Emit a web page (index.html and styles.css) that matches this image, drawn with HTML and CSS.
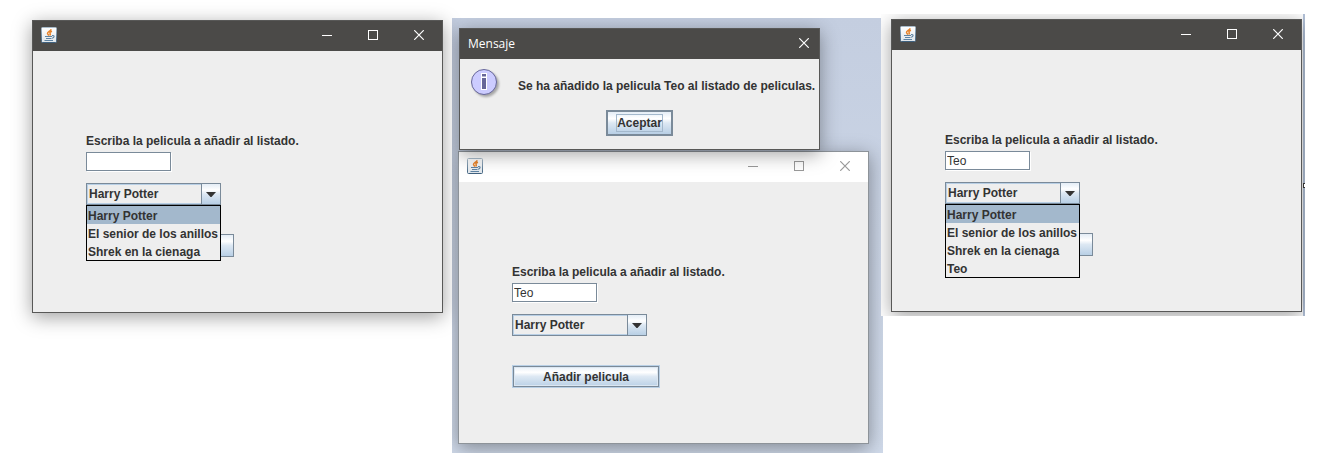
FILE: index.html
```html
<!DOCTYPE html>
<html lang="es">
<head>
<meta charset="utf-8">
<title>Listado de peliculas</title>
<link rel="stylesheet" href="styles.css">
</head>
<body>
<svg class="sprite" aria-hidden="true">
  <defs>
    <linearGradient id="tile" x1="0" y1="0" x2="0" y2="1"><stop offset="0" stop-color="#ffffff"/><stop offset="1" stop-color="#dfe5ea"/></linearGradient>
    <linearGradient id="edge" x1="0" y1="0" x2="0" y2="1"><stop offset="0" stop-color="#a9bccb"/><stop offset="1" stop-color="#3f617f"/></linearGradient>
  </defs>
  <symbol id="java" viewBox="0 0 16 16">
    <rect x=".5" y=".5" width="15" height="15" rx="1" fill="url(#tile)" stroke="url(#edge)"/>
    <path d="M10 2.300C10 4.200 6.300 4.800 6.500 6.500C6.600 7.300 7.400 7.800 7.900 8.600M11 4.300C8.800 5 8.500 5.800 9.200 6.600C9.700 7.300 9.200 7.900 8.700 8.400" fill="none" stroke="#e8832a" stroke-width="1.500"/>
    <path d="M4 9.500H11M5 11.500H10.500M3.500 13.500H12" fill="none" stroke="#5e83a3" stroke-width="1.200"/>
    <path d="M11 8.600C14 8 13.600 10.800 11 11.200" fill="none" stroke="#5e83a3" stroke-width="1.100"/>
  </symbol>
  <symbol id="min" viewBox="0 0 10 10"><path d="M0 5.500H10" stroke="currentColor"/></symbol>
  <symbol id="max" viewBox="0 0 10 10"><rect x=".5" y=".5" width="9" height="9" fill="none" stroke="currentColor"/></symbol>
  <symbol id="close" viewBox="0 0 10 10"><path d="M.2 .2L9.800 9.800M9.800 .2L.2 9.800" stroke="currentColor" stroke-width="1.200"/></symbol>
  <symbol id="arrow" viewBox="0 0 10 5"><path d="M0 0H10L5.500 5H4.500Z" fill="#333"/></symbol>
</svg>
<main class="shots">
  <section class="shot shot-first">
    <article class="window">
      <header class="titlebar">
        <svg class="app-icon"><use href="#java"/></svg>
        <div class="controls">
          <button class="control" aria-label="Minimizar"><svg><use href="#min"/></svg></button>
          <button class="control" aria-label="Maximizar"><svg><use href="#max"/></svg></button>
          <button class="control" aria-label="Cerrar"><svg><use href="#close"/></svg></button>
        </div>
      </header>
      <form class="form">
        <label class="caption" for="title-1">Escriba la pelicula a añadir al listado.</label>
        <input class="field" id="title-1" type="text">
        <div class="combo">
          <select class="select" aria-label="Peliculas"><option>Harry Potter</option><option>El senior de los anillos</option><option>Shrek en la cienaga</option></select>
          <span class="arrow"><svg><use href="#arrow"/></svg></span>
          <ul class="popup" role="listbox" aria-label="Opciones">
            <li class="option selected" role="option" aria-selected="true">Harry Potter</li>
            <li class="option" role="option">El senior de los anillos</li>
            <li class="option" role="option">Shrek en la cienaga</li>
          </ul>
        </div>
        <button class="add" type="button" aria-label="Añadir pelicula"></button>
      </form>
    </article>
  </section>

  <section class="shot shot-desktop">
    <article class="window dialog" role="dialog" aria-labelledby="dialog-title">
      <header class="titlebar">
        <h1 class="title" id="dialog-title">Mensaje</h1>
        <div class="controls">
          <button class="control" aria-label="Cerrar"><svg><use href="#close"/></svg></button>
        </div>
      </header>
      <div class="dialog-body">
        <div class="message">
          <svg class="info" viewBox="0 0 32 32" aria-hidden="true">
            <circle cx="14" cy="13" r="12.500" fill="#ccccff" stroke="#666699"/>
            <path d="M11 4H17V21H11Z" fill="#fff"/>
            <path d="M12 5H16V7.500H12ZM12 9H16V20H12Z" fill="#666699"/>
          </svg>
          <p class="message-text">Se ha añadido la pelicula Teo al listado de peliculas.</p>
        </div>
        <button class="accept" type="button"><span class="focus">Aceptar</span></button>
      </div>
    </article>
    <article class="window inactive">
      <header class="titlebar">
        <svg class="app-icon"><use href="#java"/></svg>
        <div class="controls">
          <button class="control" aria-label="Minimizar"><svg><use href="#min"/></svg></button>
          <button class="control" aria-label="Maximizar"><svg><use href="#max"/></svg></button>
          <button class="control" aria-label="Cerrar"><svg><use href="#close"/></svg></button>
        </div>
      </header>
      <form class="form">
        <label class="caption" for="title-2">Escriba la pelicula a añadir al listado.</label>
        <input class="field" id="title-2" type="text" value="Teo">
        <div class="combo">
          <select class="select" aria-label="Peliculas"><option>Harry Potter</option><option>El senior de los anillos</option><option>Shrek en la cienaga</option></select>
          <span class="arrow"><svg><use href="#arrow"/></svg></span>
        </div>
        <button class="add hovered" type="button">Añadir pelicula</button>
      </form>
    </article>
  </section>

  <section class="shot shot-last">
    <article class="window">
      <header class="titlebar">
        <svg class="app-icon"><use href="#java"/></svg>
        <div class="controls">
          <button class="control" aria-label="Minimizar"><svg><use href="#min"/></svg></button>
          <button class="control" aria-label="Maximizar"><svg><use href="#max"/></svg></button>
          <button class="control" aria-label="Cerrar"><svg><use href="#close"/></svg></button>
        </div>
      </header>
      <form class="form">
        <label class="caption" for="title-3">Escriba la pelicula a añadir al listado.</label>
        <input class="field" id="title-3" type="text" value="Teo">
        <div class="combo">
          <select class="select" aria-label="Peliculas"><option>Harry Potter</option><option>El senior de los anillos</option><option>Shrek en la cienaga</option><option>Teo</option></select>
          <span class="arrow"><svg><use href="#arrow"/></svg></span>
          <ul class="popup" role="listbox" aria-label="Opciones">
            <li class="option selected" role="option" aria-selected="true">Harry Potter</li>
            <li class="option" role="option">El senior de los anillos</li>
            <li class="option" role="option">Shrek en la cienaga</li>
            <li class="option" role="option">Teo</li>
          </ul>
        </div>
        <button class="add" type="button" aria-label="Añadir pelicula"></button>
      </form>
    </article>
  </section>
</main>
</body>
</html>
```
FILE: styles.css
```css
*, *::after { box-sizing: border-box; }

body {
  margin: 0;
  background: #fff;
  color: #333;
  font: bold 12px/18px "Liberation Sans", Arial, sans-serif;
}

button, input, select { font: inherit; color: inherit; margin: 0; padding: 0; border-radius: 0; }
h1, p, ul { margin: 0; padding: 0; list-style: none; }
svg { display: block; }
.sprite { position: absolute; width: 0; height: 0; }

.shots {
  display: grid;
  grid-template-columns: 452fr 431fr 422fr;
  align-items: start;
  padding: 14px 36px 10px 0;
}

.shot-first { padding: 6px 9px 0 32px; }

.shot-desktop {
  margin-top: 4px;
  padding: 10px 14px 9px 6px;
  background: linear-gradient(#c4cee0, #d0daea);
  overflow: hidden;
}

.shot-last {
  position: relative;
  margin-left: -2px;
  padding: 5px 3px 4px 10px;
  background: linear-gradient(to left, #b4c3da 2px, #fff 2px);
  overflow: hidden;
}
.shot-last::after {
  content: "";
  position: absolute;
  top: 169px;
  right: 0;
  width: 2px;
  height: 5px;
  border: solid #333;
  border-width: 1px 0 1px 1px;
  background: #fff;
}

.window {
  position: relative;
  border: 1px solid #585857;
  background: #eee;
  box-shadow: 0 4px 18px rgba(0, 0, 0, .38);
}

.titlebar {
  display: flex;
  align-items: center;
  height: 30px;
  padding: 0 0 2px 8px;
  background: #4b4a48;
  color: #fff;
}
.app-icon { width: 16px; height: 16px; }
.title { padding-top: 2px; font: 12px/16px "Open Sans", "Noto Sans", sans-serif; }
.controls { display: flex; margin-left: auto; }
.control {
  display: flex;
  align-items: center;
  justify-content: center;
  width: 46px;
  height: 28px;
  border: 0;
  background: none;
}
.control svg { width: 10px; height: 10px; }

.inactive { margin-top: 1px; border-color: #8d9399; }
.inactive .titlebar { background: #fff; color: #999; }

.form {
  display: flex;
  flex-direction: column;
  align-items: flex-start;
  padding: 81px 53px 55px;
}
.caption { height: 20px; white-space: nowrap; }

.field {
  width: 85px;
  height: 19px;
  padding: 1px 0 0 1px;
  border: 1px solid #7a8a99;
  background: #fff;
  box-shadow: 1px 1px #fff;
  font-weight: normal;
  outline: 0;
}

.combo {
  position: relative;
  display: grid;
  grid-template-columns: 1fr 20px;
  width: 135px;
  height: 22px;
  margin: 12px 0 29px;
}
.select {
  grid-area: 1 / 1 / 2 / 3;
  appearance: none;
  padding: 0 20px 0 2px;
  border: 1px solid #7a8a99;
  background: #eee;
  box-shadow: inset 0 0 0 1px #b8cfe5;
  outline: 0;
}
.arrow {
  grid-area: 1 / 2;
  z-index: 1;
  display: flex;
  align-items: center;
  justify-content: center;
  border: 1px solid #7a8a99;
  background: linear-gradient(#e4edf6, #fff 30%, #dde8f3 50%, #b8cfe5);
  pointer-events: none;
}
.arrow svg { width: 10px; height: 5px; }

.popup {
  position: absolute;
  z-index: 2;
  top: 100%;
  left: 0;
  right: 0;
  border: 1px solid #000;
  background: #eee;
}
.option { height: 18px; padding: 1px 0 0 1px; white-space: nowrap; }
.selected { background: #a3b8cc; }

.add {
  width: 148px;
  height: 23px;
  border: 1px solid #7a8a99;
  background: linear-gradient(#e4edf6, #fff 30%, #dde8f3 50%, #b8cfe5);
}
.hovered {
  border-color: #b8cfe5;
  box-shadow: inset 0 0 0 1px #7a8a99, inset 0 0 0 2px #dce7f2;
}

.dialog { z-index: 1; margin: 0 49px 0 1px; }
.dialog .control { width: 30px; }
.dialog-body {
  display: flex;
  flex-direction: column;
  align-items: center;
  gap: 9px;
  padding: 10px 10px 13px;
}
.message { display: flex; align-items: center; gap: 16px; width: 100%; }
.info { flex: none; width: 32px; height: 32px; filter: drop-shadow(2px 2px 1px rgba(0, 0, 0, .3)); }
.message-text { padding-top: 2px; white-space: nowrap; }
.accept {
  min-width: 67px;
  padding: 2px 8px;
  border: 2px solid #7a8a99;
  background: linear-gradient(#e4edf6, #fff 30%, #dde8f3 50%, #b8cfe5);
}
.focus { display: block; border: 1px solid #a3b8cc; line-height: 16px; }
```
